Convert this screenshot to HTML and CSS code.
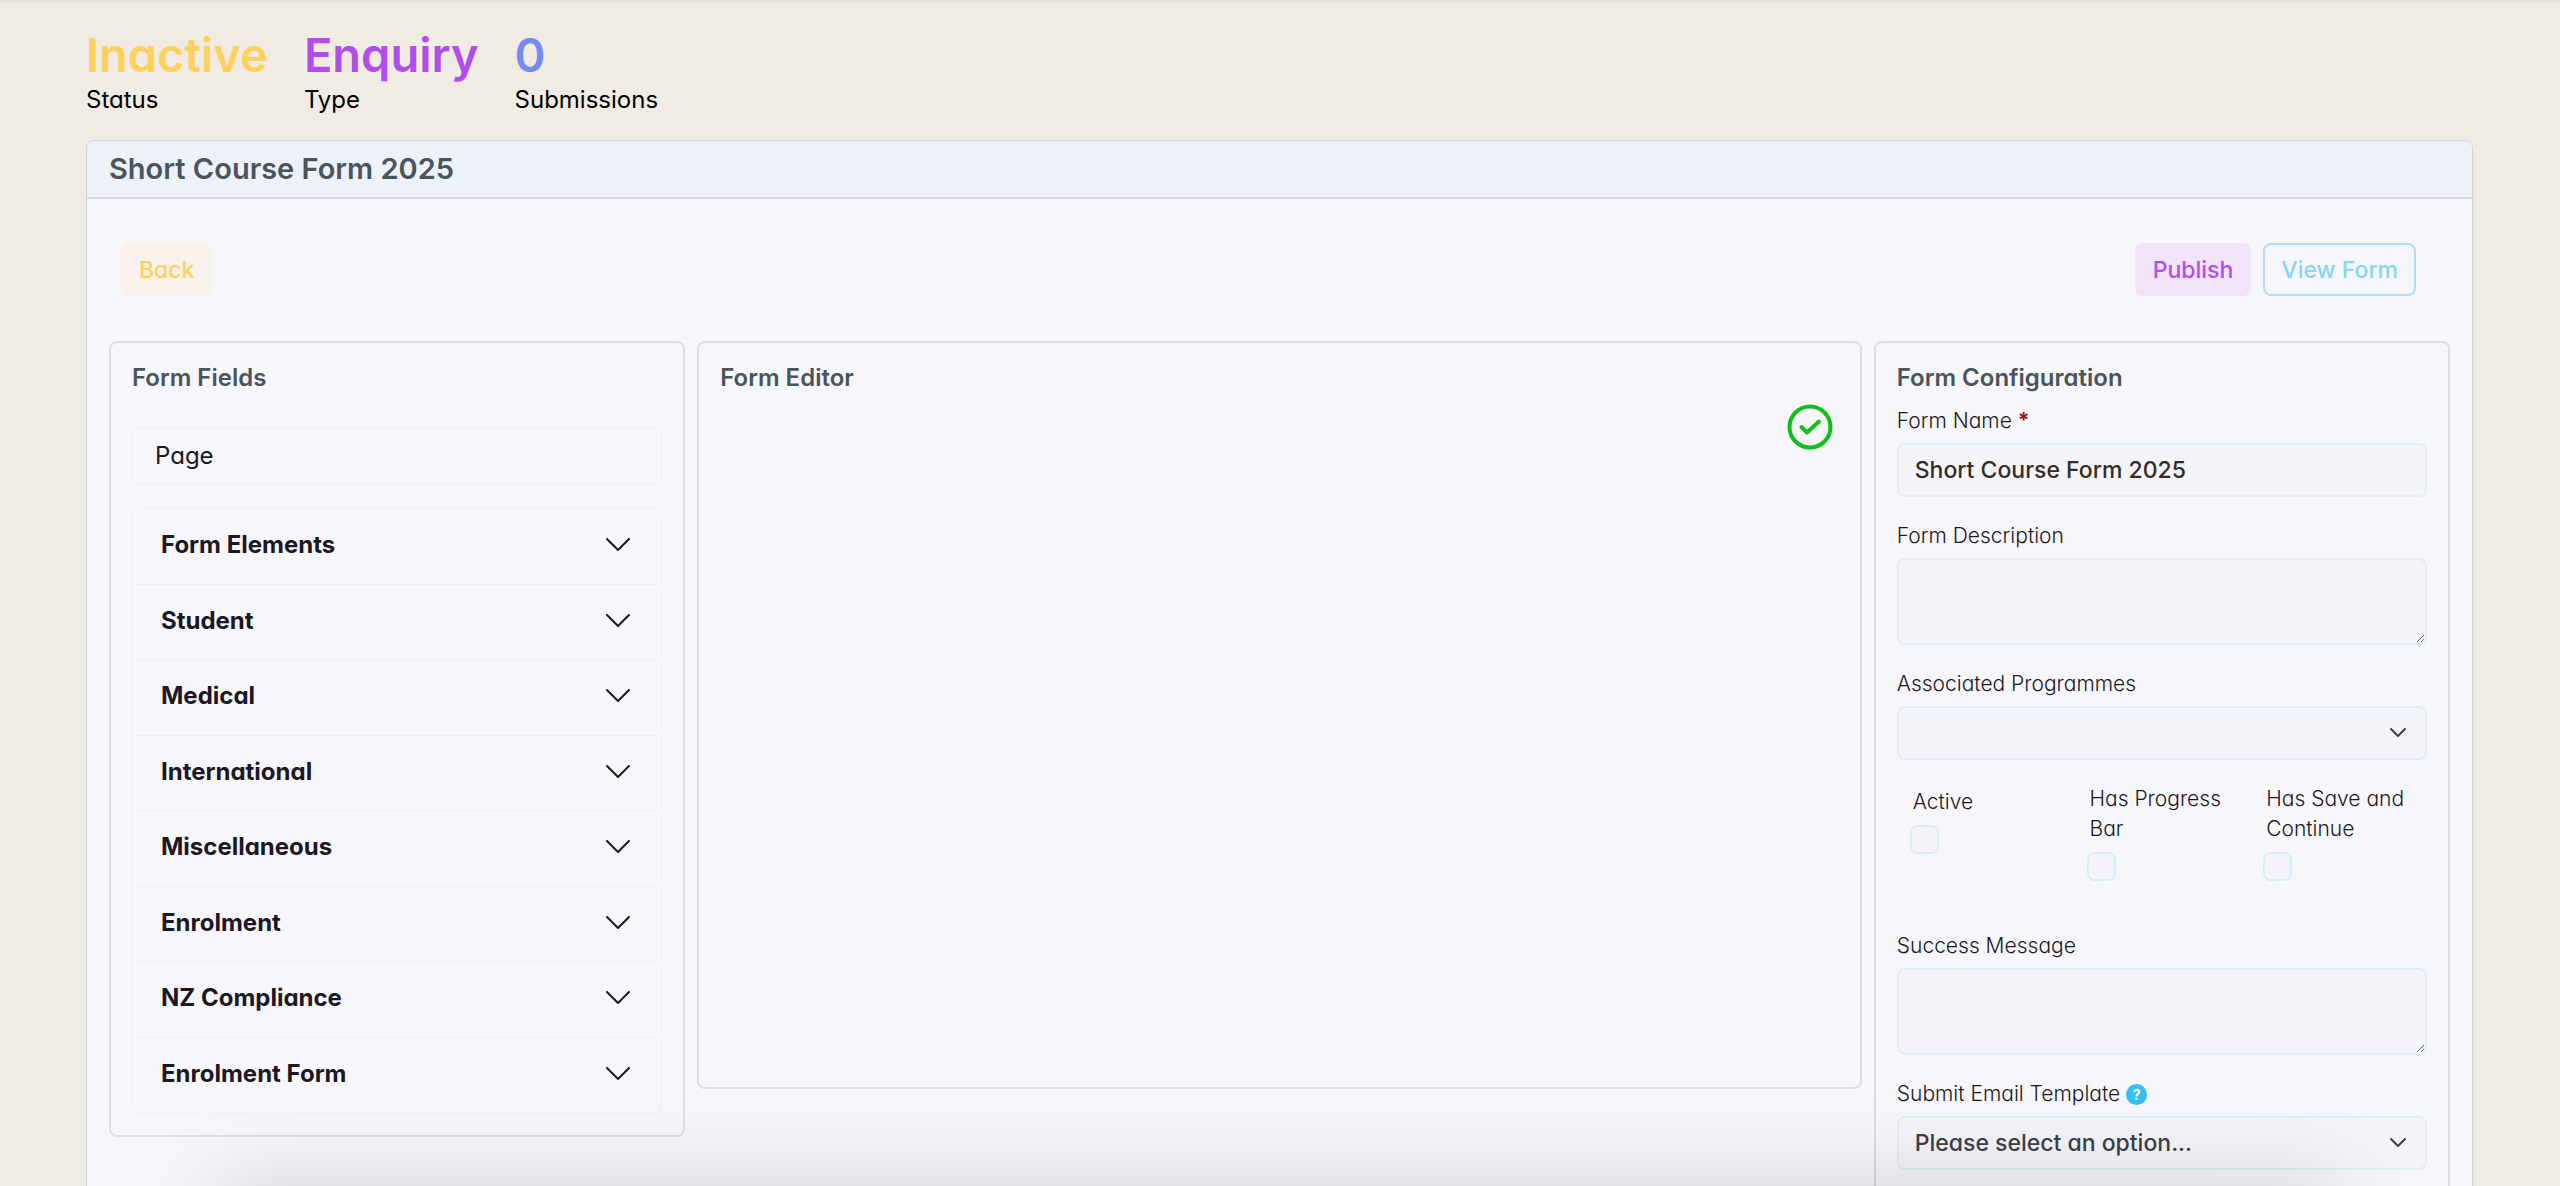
FILE: index.html
```html
<!DOCTYPE html>
<html lang="en">
<head>
<meta charset="utf-8">
<meta name="viewport" content="width=device-width, initial-scale=1">
<title>Short Course Form 2025</title>
<link rel="stylesheet" href="styles.css">
</head>
<body>
<main class="page">
  <dl class="stats">
    <div class="stat"><dd class="stat-value stat-status">Inactive</dd><dt class="stat-label">Status</dt></div>
    <div class="stat"><dd class="stat-value stat-type">Enquiry</dd><dt class="stat-label">Type</dt></div>
    <div class="stat"><dd class="stat-value stat-count">0</dd><dt class="stat-label">Submissions</dt></div>
  </dl>

  <section class="card">
    <header class="card-header"><h1 class="card-title">Short Course Form 2025</h1></header>
    <div class="card-body">
      <div class="toolbar">
        <button type="button" class="btn btn-back">Back</button>
        <div class="toolbar-end">
          <button type="button" class="btn btn-publish">Publish</button>
          <button type="button" class="btn btn-view">View Form</button>
        </div>
      </div>

      <div class="columns">
        <section class="panel panel-fields">
          <h2 class="panel-title">Form Fields</h2>
          <div class="page-item">Page</div>
          <div class="accordion">
            <button type="button" class="accordion-item">Form Elements<svg class="chevron" viewBox="0 0 24 14"><path d="M1 1l11 11L23 1"/></svg></button>
            <button type="button" class="accordion-item">Student<svg class="chevron" viewBox="0 0 24 14"><path d="M1 1l11 11L23 1"/></svg></button>
            <button type="button" class="accordion-item">Medical<svg class="chevron" viewBox="0 0 24 14"><path d="M1 1l11 11L23 1"/></svg></button>
            <button type="button" class="accordion-item">International<svg class="chevron" viewBox="0 0 24 14"><path d="M1 1l11 11L23 1"/></svg></button>
            <button type="button" class="accordion-item">Miscellaneous<svg class="chevron" viewBox="0 0 24 14"><path d="M1 1l11 11L23 1"/></svg></button>
            <button type="button" class="accordion-item">Enrolment<svg class="chevron" viewBox="0 0 24 14"><path d="M1 1l11 11L23 1"/></svg></button>
            <button type="button" class="accordion-item">NZ Compliance<svg class="chevron" viewBox="0 0 24 14"><path d="M1 1l11 11L23 1"/></svg></button>
            <button type="button" class="accordion-item">Enrolment Form<svg class="chevron" viewBox="0 0 24 14"><path d="M1 1l11 11L23 1"/></svg></button>
          </div>
        </section>

        <section class="panel panel-editor">
          <h2 class="panel-title">Form Editor</h2>
          <div class="editor-status">
            <svg class="check" viewBox="0 0 46 46" role="img" aria-label="Saved"><circle cx="23" cy="23" r="20.5"/><path d="M14.500 23l5.500 5.500L32 17.500"/></svg>
          </div>
        </section>

        <section class="panel panel-config">
          <h2 class="panel-title">Form Configuration</h2>
          <form class="config">
            <div class="field">
              <label class="label" for="form-name">Form Name <span class="required">*</span></label>
              <input class="control" id="form-name" type="text" value="Short Course Form 2025">
            </div>
            <div class="field">
              <label class="label" for="form-description">Form Description</label>
              <textarea class="control control-area" id="form-description"></textarea>
            </div>
            <div class="field">
              <label class="label" for="programmes">Associated Programmes</label>
              <div class="select-wrap">
                <select class="control control-select" id="programmes"><option></option></select>
                <svg class="select-arrow" viewBox="0 0 18 12"><path d="M2 2l7 7 7-7"/></svg>
              </div>
            </div>
            <div class="checks">
              <div class="check-field check-first"><label class="label check-label" for="active">Active</label><input class="tick" id="active" type="checkbox"></div>
              <div class="check-field"><label class="label check-label" for="progress">Has Progress Bar</label><input class="tick" id="progress" type="checkbox"></div>
              <div class="check-field"><label class="label check-label" for="save">Has Save and Continue</label><input class="tick" id="save" type="checkbox"></div>
            </div>
            <div class="field">
              <label class="label" for="success">Success Message</label>
              <textarea class="control control-area" id="success"></textarea>
            </div>
            <div class="field">
              <label class="label" for="template">Submit Email Template <span class="help">?</span></label>
              <div class="select-wrap">
                <select class="control control-select" id="template"><option>Please select an option...</option></select>
                <svg class="select-arrow" viewBox="0 0 18 12"><path d="M2 2l7 7 7-7"/></svg>
              </div>
            </div>
          </form>
        </section>
      </div>
    </div>
  </section>
</main>
<div class="bottom-shade"></div>
</body>
</html>
```
FILE: styles.css
```css
* { box-sizing: border-box; }

body {
  margin: 0;
  background: #f0ebe3;
  color: #1b1824;
  font-family: Inter, "Open Sans", sans-serif;
  font-feature-settings: "cv11";
  font-size: 24px;
  line-height: 32px;
  overflow: hidden;
}

button, input, textarea, select {
  font: inherit;
  font-feature-settings: inherit;
  color: inherit;
}

.page {
  height: 100vh;
  padding: 29px 87px 60px 86px;
  overflow-y: auto;
  scrollbar-width: none;
  box-shadow: inset 0 4px 4px -2px rgba(0, 0, 0, .06);
}

.stats { display: flex; gap: 36px; margin: 0 0 21px; }
.stat { display: flex; flex-direction: column; }
.stat-value { margin: 0; font-size: 47px; font-weight: 600; line-height: 51px; }
.stat-label { color: #000; line-height: 39px; }
.stat-status { color: #ffd15c; }
.stat-type { color: #b14dee; }
.stat-count { color: #758bf0; }

.card {
  background: #f7f6fb;
  border: 1px solid #d3d3db;
  border-radius: 8px;
  overflow: hidden;
}
.card-header {
  padding: 12px 22px;
  background: #edf1fa;
  border-bottom: 2px solid #d3d5db;
}
.card-title { margin: 0; color: #4a545b; font-size: 29px; font-weight: 600; line-height: 32px; }
.card-body { padding: 44px 22px 22px; }

.toolbar {
  display: flex;
  justify-content: space-between;
  padding: 0 34px 0 12px;
  margin-bottom: 45px;
}
.toolbar-end { display: flex; gap: 12px; }
.btn {
  height: 53px;
  padding: 0 16px;
  border: 2px solid transparent;
  border-radius: 8px;
  font-size: 23px;
  font-weight: 500;
}
.btn-back { background: #f9f2ec; color: #ffd15c; }
.btn-publish { background: #f1e3f8; color: #b14dee; }
.btn-view { background: transparent; border-color: #ace0f8; color: #86d4f8; }

.columns {
  display: grid;
  grid-template-columns: repeat(12, 1fr);
  gap: 12px;
  align-items: start;
}
.panel {
  border: 2px solid #dddde3;
  border-radius: 8px;
  padding: 19px 21px 21px;
}
.panel-fields { grid-column: span 3; }
.panel-editor { grid-column: span 6; min-height: 748px; }
.panel-config { grid-column: span 3; padding-bottom: 80px; }
.panel-title { margin: 0; color: #4a545b; font-size: 24px; font-weight: 600; line-height: 32px; }

.page-item {
  margin: 33px 0 23px;
  padding: 12px 22px;
  border: 1px solid #f0f0f4;
  border-radius: 8px;
}
.accordion {
  display: grid;
  grid-auto-rows: 1fr;
  min-height: 606px;
  border: 1px solid #f0f0f4;
  border-radius: 8px;
}
.accordion-item {
  display: flex;
  align-items: center;
  justify-content: space-between;
  padding: 0 31px 2px 28px;
  border: 0;
  border-bottom: 1px solid #f0f0f4;
  background: transparent;
  font-weight: 700;
  text-align: left;
}
.accordion-item:last-child { border-bottom: 0; }
.chevron { width: 24px; height: 14px; fill: none; stroke: #1b1824; stroke-width: 2; stroke-linecap: round; stroke-linejoin: round; }

.editor-status { display: flex; justify-content: flex-end; padding: 10px 6px; }
.check { width: 46px; height: 46px; fill: none; stroke: #0fbf1b; stroke-width: 4; stroke-linecap: round; stroke-linejoin: round; }

.config { display: flex; flex-direction: column; margin-top: 12px; }
.field { display: flex; flex-direction: column; margin-bottom: 24px; }
.label { font-size: 21px; line-height: 30px; margin-bottom: 7px; font-weight: 300; color: #1b1824; }
.required { color: #981414; font-weight: 700; }
.help {
  display: inline-block;
  width: 21px;
  border-radius: 50%;
  background: #3abdf5;
  color: #fff;
  font-size: 14px;
  font-weight: 700;
  line-height: 21px;
  text-align: center;
  vertical-align: 1px;
}
.control {
  width: 100%;
  height: 54px;
  padding: 0 16px;
  border: 2px solid #dfeef9;
  border-radius: 8px;
  background: #f5f4fa;
  color: #352d25;
  font-size: 23px;
  font-weight: 500;
}
.control-area { display: block; height: 87px; resize: vertical; }
.select-wrap { display: grid; align-items: center; }
.control-select { grid-area: 1 / 1; appearance: none; color: #3a4147; }
.select-arrow { grid-area: 1 / 1; justify-self: end; width: 18px; height: 12px; margin-right: 20px; fill: none; stroke: #3a4147; stroke-width: 2; stroke-linecap: round; stroke-linejoin: round; pointer-events: none; }

.checks { display: grid; grid-template-columns: repeat(3, 1fr); margin-bottom: 50px; }
.check-field { display: flex; flex-direction: column; padding-left: 13px; }
.check-label { padding-left: 3px; margin-bottom: 8px; }
.check-first { padding-top: 3px; }
.tick {
  appearance: none;
  width: 29px;
  height: 29px;
  margin: 0;
  border: 2px solid #d9edf9;
  border-radius: 7px;
  background: #f5f4fa;
}

.bottom-shade {
  position: fixed;
  left: 210px;
  right: 210px;
  top: 100%;
  height: 80px;
  border-radius: 40px;
  box-shadow: 0 0 90px rgba(0, 0, 0, .17);
  pointer-events: none;
}
```
